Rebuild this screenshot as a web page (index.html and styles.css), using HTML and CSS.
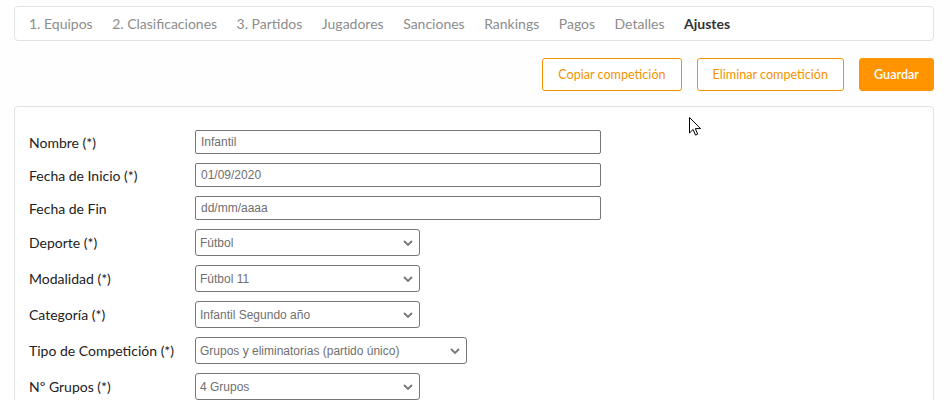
FILE: index.html
```html
<!DOCTYPE html>
<html lang="es">
<head>
<meta charset="utf-8">
<title>Ajustes</title>
<link rel="stylesheet" href="styles.css">
</head>
<body>
<div class="page">
  <nav class="tabs">
    <a class="tab">1. Equipos</a>
    <a class="tab">2. Clasificaciones</a>
    <a class="tab">3. Partidos</a>
    <a class="tab">Jugadores</a>
    <a class="tab">Sanciones</a>
    <a class="tab">Rankings</a>
    <a class="tab">Pagos</a>
    <a class="tab">Detalles</a>
    <a class="tab active">Ajustes</a>
  </nav>
  <div class="actions">
    <button class="btn btn-outline">Copiar competición</button>
    <button class="btn btn-outline">Eliminar competición</button>
    <button class="btn btn-solid">Guardar</button>
  </div>
  <div class="card">
    <div class="row">
      <label class="label">Nombre (*)</label>
      <input class="input" type="text" value="Infantil">
    </div>
    <div class="row">
      <label class="label">Fecha de Inicio (*)</label>
      <input class="input" type="text" value="01/09/2020">
    </div>
    <div class="row">
      <label class="label">Fecha de Fin</label>
      <input class="input" type="text" value="dd/mm/aaaa">
    </div>
    <div class="row">
      <label class="label">Deporte (*)</label>
      <div class="select-wrap"><select class="select"><option>Fútbol</option></select><svg class="chev" viewBox="0 0 10 6"><path d="M1 1l4 4 4-4"/></svg></div>
    </div>
    <div class="row">
      <label class="label">Modalidad (*)</label>
      <div class="select-wrap"><select class="select"><option>Fútbol 11</option></select><svg class="chev" viewBox="0 0 10 6"><path d="M1 1l4 4 4-4"/></svg></div>
    </div>
    <div class="row">
      <label class="label">Categoría (*)</label>
      <div class="select-wrap"><select class="select"><option>Infantil Segundo año</option></select><svg class="chev" viewBox="0 0 10 6"><path d="M1 1l4 4 4-4"/></svg></div>
    </div>
    <div class="row">
      <label class="label">Tipo de Competición (*)</label>
      <div class="select-wrap wide"><select class="select"><option>Grupos y eliminatorias (partido único)</option></select><svg class="chev" viewBox="0 0 10 6"><path d="M1 1l4 4 4-4"/></svg></div>
    </div>
    <div class="row">
      <label class="label">Nº Grupos (*)</label>
      <div class="select-wrap"><select class="select"><option>4 Grupos</option></select><svg class="chev" viewBox="0 0 10 6"><path d="M1 1l4 4 4-4"/></svg></div>
    </div>
  </div>
</div>
<svg class="cursor" viewBox="0 0 12 19" width="12" height="19"><path d="M0.5 0.5v15.5l3.6-3.5 2.4 5.6 2.2-1-2.4-5.5h5.2z" fill="#fff" stroke="#000" stroke-width="1"/></svg>
</body>
</html>
```
FILE: styles.css
```css
* { box-sizing: border-box; }
body {
  margin: 0;
  background: #fefefe;
  font-family: Lato, "Open Sans", sans-serif;
  color: #222;
  height: 400px;
  overflow: hidden;
}
.page {
  padding: 6px 16px 0 14px;
}
.tabs {
  display: flex;
  align-items: center;
  gap: 19.5px;
  height: 35px;
  padding: 0 14px;
  border: 1px solid #e2e2e2;
  border-radius: 4px;
  background: #fff;
}
.tab {
  font-size: 14px;
  color: #8c8c8c;
}
.tab.active {
  color: #333;
  font-weight: 700;
}
.actions {
  display: flex;
  justify-content: flex-end;
  gap: 15px;
  margin-top: 17px;
}
.btn {
  height: 33px;
  padding: 0 15px;
  border-radius: 3px;
  font-family: Lato, "Open Sans", sans-serif;
  font-size: 12.6px;
  cursor: pointer;
}
.btn-outline {
  background: #fff;
  border: 1px solid #f39200;
  color: #f39200;
}
.btn-solid {
  background: #ff9400;
  border: 1px solid #ff9400;
  color: #fff;
  font-weight: 600;
  padding: 0 14px;
}
.card {
  margin-top: 15px;
  border: 1px solid #e2e2e2;
  border-radius: 4px;
  background: #fff;
  padding: 23px 14px 40px;
  display: flex;
  flex-direction: column;
  gap: 9px;
}
.row {
  display: flex;
  align-items: center;
}
.label {
  width: 166px;
  font-size: 14px;
  color: #222;
}
.input {
  width: 406px;
  height: 24px;
  border: 1px solid #767676;
  border-radius: 2px;
  padding: 0 5px;
  font-family: "Liberation Sans", Arial, sans-serif;
  font-size: 12px;
  color: #6f6f6f;
  background: #fff;
}
.select-wrap {
  position: relative;
  width: 225px;
  height: 27px;
}
.select-wrap.wide {
  width: 272px;
}
.select {
  appearance: none;
  -webkit-appearance: none;
  width: 100%;
  height: 100%;
  border: 1px solid #767676;
  border-radius: 3px;
  padding: 0 4px;
  font-family: "Liberation Sans", Arial, sans-serif;
  font-size: 12px;
  color: #6f6f6f;
  background: #fff;
}
.chev {
  position: absolute;
  right: 7px;
  top: 11px;
  width: 10px;
  height: 6px;
  fill: none;
  stroke: #777;
  stroke-width: 1.8;
  pointer-events: none;
}
.cursor {
  position: absolute;
  left: 689px;
  top: 117px;
}
```
